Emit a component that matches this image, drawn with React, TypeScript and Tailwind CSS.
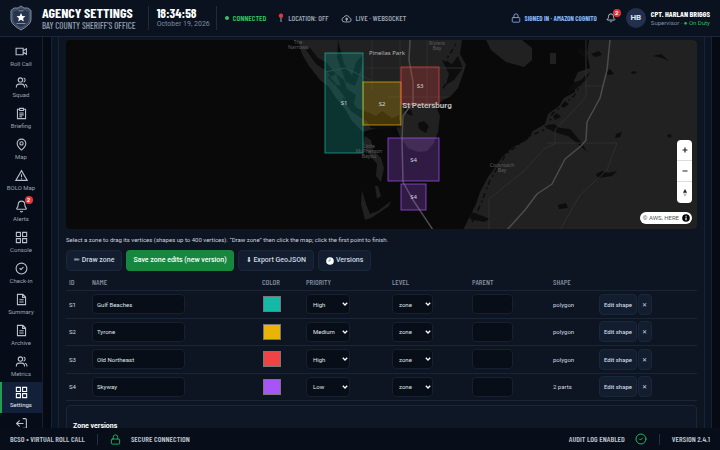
import type { ReactNode } from "react";
import { Bell, CircleCheck, Lock, LogOut, MapPin } from "lucide-react";

const condensed = "font-['Barlow_Condensed','Roboto_Condensed','Open_Sans_Condensed','Noto_Sans_Condensed','Liberation_Sans_Narrow',Roboto,sans-serif]";

type IconProps = { className?: string };

function Glyph({ className, children }: { className?: string; children: ReactNode }) {
  return (
    <svg viewBox="0 0 24 24" fill="none" stroke="currentColor" strokeWidth="2" className={className} aria-hidden="true">
      {children}
    </svg>
  );
}

function VideoIcon({ className }: IconProps) {
  return (
    <Glyph className={className}>
      <path d="M2 6h13v12H2ZM15 10.500 21 7v10l-6-3.500" />
    </Glyph>
  );
}

function PeopleIcon({ className }: IconProps) {
  return (
    <Glyph className={className}>
      <circle cx="10" cy="7.500" r="4" />
      <path d="M2.500 21v-1.500a5 5 0 0 1 5-4.500h5a5 5 0 0 1 5 4.500V21M16 3.700a4 4 0 0 1 0 7.600M18.500 15.200a5 5 0 0 1 3.500 4.300V21" />
    </Glyph>
  );
}

function ClipboardIcon({ className }: IconProps) {
  return (
    <Glyph className={className}>
      <path d="M8.500 4H4.500v17.500h15V4h-4M8.500 2.500h7v4h-7ZM8 11h8M8 14.500h8M8 18h5" />
    </Glyph>
  );
}

function TriangleIcon({ className }: IconProps) {
  return (
    <Glyph className={className}>
      <path d="M12 3 22.500 21h-21ZM12 9.500v5.500M12 17v1.800" />
    </Glyph>
  );
}

function GridIcon({ className }: IconProps) {
  return (
    <Glyph className={className}>
      <path d="M2.500 2.500h7.500v7.500H2.500ZM14 2.500h7.500v7.500H14ZM2.500 14h7.500v7.500H2.500ZM14 14h7.500v7.500H14Z" />
    </Glyph>
  );
}

function DocumentIcon({ className }: IconProps) {
  return (
    <Glyph className={className}>
      <path d="M14.500 2.500h-10v19h15v-14ZM14 2.500V8h5.500M8 12.500h8M8 16.500h8" />
    </Glyph>
  );
}

function CloudIcon({ className }: IconProps) {
  return (
    <Glyph className={className}>
      <path d="M7 19.500a5 5 0 0 1-.8-9.900 6.500 6.500 0 0 1 12.200.8 4.600 4.600 0 0 1-.6 9.100Z" />
      <circle cx="12.300" cy="13" r="2" fill="currentColor" />
      <path d="M12.300 14v4" />
    </Glyph>
  );
}

function Badge({ children }: { children: ReactNode }) {
  return (
    <span className="absolute -top-1 -right-[5px] flex size-2 items-center justify-center rounded-full bg-[#e5343a] text-[6px] leading-none font-bold text-white">
      {children}
    </span>
  );
}

const navItems = [
  { label: "Roll Call", Icon: VideoIcon },
  { label: "Squad", Icon: PeopleIcon },
  { label: "Briefing", Icon: ClipboardIcon },
  { label: "Map", Icon: MapPin },
  { label: "BOLO Map", Icon: TriangleIcon },
  { label: "Alerts", Icon: Bell, badge: 2 },
  { label: "Console", Icon: GridIcon },
  { label: "Check-in", Icon: CircleCheck },
  { label: "Summary", Icon: DocumentIcon },
  { label: "Archive", Icon: DocumentIcon },
  { label: "Metrics", Icon: PeopleIcon },
  { label: "Settings", Icon: GridIcon, active: true },
];

function Sidebar() {
  return (
    <nav className="w-[43px] shrink-0 overflow-hidden border-r border-[#172131] bg-[#070d18] pt-1">
      {navItems.map(({ label, Icon, badge, active }) => (
        <a
          key={label}
          href="#"
          className={
            "flex h-[31px] flex-col items-center gap-px border-l-2 pt-1 pr-0.5 text-[6px] leading-[10px] " +
            (active ? "border-[#22a050] bg-[#12203a] text-[#e4e9f0]" : "border-transparent text-[#9aa4b3]")
          }
        >
          <span className={"relative " + (active ? "text-white" : "text-[#b9c1cd]")}>
            <Icon className="size-[13px]" />
            {badge && <Badge>{badge}</Badge>}
          </span>
          <span className="whitespace-nowrap">{label}</span>
        </a>
      ))}
      <a href="#" aria-label="Sign out" className="flex h-[31px] justify-center border-l-2 border-transparent pt-1 pr-0.5 text-[#b9c1cd]">
        <LogOut className="size-[13px] rotate-180" />
      </a>
    </nav>
  );
}

function ShieldLogo() {
  return (
    <svg viewBox="0 0 22 26" className="h-[26px] w-[22px] shrink-0" aria-label="Sheriff badge">
      <path d="M11 1 14 3 18 3 21 5.500V14c0 5-5 8-10 11C6 22 1 19 1 14V5.500L4 3 8 3Z" fill="#35435b" stroke="#9aa8bc" strokeWidth="0.800" />
      <path d="M11 2.800 14 4.600 19.200 6V14c0 4-4 6.500-8.200 9C6.800 20.500 2.800 18 2.800 14V6L8 4.600Z" fill="#27344b" stroke="#66758c" strokeWidth="0.500" />
      <path d="m11 8 1.300 2.900 3.200.3-2.400 2.100.7 3.100-2.800-1.600-2.800 1.600.7-3.100-2.400-2.100 3.200-.3Z" fill="#fff" />
      <path d="M8.500 5.800h5M6.500 18.500h9" stroke="#8796ad" strokeWidth="0.900" />
    </svg>
  );
}

function Header() {
  return (
    <header className="flex h-[37px] shrink-0 items-center border-b border-[#1b2738] bg-[#0a1220] px-[10px]">
      <ShieldLogo />
      <div className={"ml-[10px] " + condensed}>
        <h1 className="text-[14px] leading-[15px] font-bold whitespace-nowrap text-white">AGENCY SETTINGS</h1>
        <p className="text-[9px] leading-[11px] font-medium whitespace-nowrap text-[#94a0b2]">BAY COUNTY SHERIFF'S OFFICE</p>
      </div>
      <span className="mr-2 ml-3 h-6 w-px bg-[#1f2a3b]" />
      <div>
        <div className={"text-[13px] leading-[13px] font-bold text-white " + condensed}>18:34:58</div>
        <div className="text-[7px] leading-[9px] whitespace-nowrap text-[#7f8b9d]">October 19, 2026</div>
      </div>
      <span className="mr-2 ml-[6px] h-6 w-px bg-[#1f2a3b]" />
      <div className={"flex items-center gap-3 text-[8px] leading-[10px] whitespace-nowrap text-[#a3adbb] " + condensed}>
        <span className="flex items-center gap-1 font-semibold text-[#35c463]">
          <span className="size-1 rounded-full bg-[#35c463]" />
          CONNECTED
        </span>
        <span className="flex items-center gap-1 font-medium">
          <svg viewBox="0 0 6 10" className="h-[10px] w-[6px]" aria-hidden="true">
            <path d="M3 4v5" stroke="#aab4c2" strokeWidth="0.900" />
            <circle cx="3" cy="2.800" r="2.200" fill="#e0383e" />
          </svg>
          LOCATION: OFF
        </span>
        <span className="flex items-center gap-1 font-medium">
          <CloudIcon className="size-[11px]" />
          LIVE · WEBSOCKET
        </span>
      </div>
      <div className="ml-auto flex items-center">
        <span className={"flex items-center gap-1 text-[7px] leading-[10px] font-bold whitespace-nowrap text-[#86b4ee] " + condensed}>
          <Lock className="size-[10px]" />
          SIGNED IN · AMAZON COGNITO
        </span>
        <button type="button" aria-label="Notifications" className="relative ml-[9px] text-[#d5dbe4]">
          <Bell className="size-[10px]" />
          <Badge>2</Badge>
        </button>
        <span className="ml-[10px] flex size-5 items-center justify-center rounded-full bg-[#22304e] text-[8px] font-bold text-[#dfe6f0]">
          HB
        </span>
        <div className="ml-[5px] whitespace-nowrap">
          <div className={"text-[8px] leading-[9px] font-bold text-white " + condensed}>CPT. HARLAN BRIGGS</div>
          <div className="text-[6px] leading-[8px] text-[#8290a3]">
            Supervisor · <span className="text-[#30b95c]">● On Duty</span>
          </div>
        </div>
      </div>
    </header>
  );
}

const mapZones = [
  { name: "S1", x: 259, y: 13, w: 38, h: 100, color: "#14b8a6" },
  { name: "S2", x: 297, y: 42, w: 38, h: 43, color: "#eab308" },
  { name: "S3", x: 335, y: 27, w: 38, h: 37, color: "#ef4444" },
  { name: "S4", x: 322, y: 98, w: 51, h: 43, color: "#a855f7" },
  { name: "S4", x: 335, y: 144, w: 25, h: 26, color: "#a855f7" },
];

function ZoneMap() {
  return (
    <div className="relative h-[189px] overflow-hidden rounded bg-[#090909]">
      <svg
        viewBox="0 0 631 189"
        preserveAspectRatio="xMidYMid slice"
        className="size-full font-['Noto_Sans',sans-serif]"
        role="img"
        aria-label="Zone map"
      >
        {/* land */}
        <g fill="#212121">
          <path d="M232 0 236 14 243 26 254 40 263 47 270 58 279 69 286 81 297 92 303 90 312 88 330 86 334 97 342 108 352 112 361 111 368 103 372 92 374 76 370 66 377 60 384 57 392 48 397 34 400 25 394 14 396 0Z" />
          <path d="M523 0 521 14 524 28 512 32 508 41 509 52 498 58 493 66 482 74 479 84 467 91 461 100 447 107 436 117 430 126 422 137 414 152 410 164 404 176 397 190H631V0Z" />
          <path d="M420 0 425 10 440 22 458 27 466 20 466 8 456 0ZM484 13h6v11h-6Z" />
          <path d="M299 96l6 4 2 10 8 8 3 10-3 14-5-6 1-12-8-10-6-10ZM296 150l4 14 4 10 8-3 13-10-2 5-18 12-6 2-4-16ZM309 146h3l3 10-4 3Z" />
        </g>
        {/* inlets and lakes */}
        <g fill="#0d0d0d">
          <path d="M240 10l10 14 12 8 6 12 7 2-5-12-9-11-9-5-8-10ZM272 0l6 24 8 12 4-14 8-8-3 16-6 16-9-4-9-24ZM302 72l8 4 6-5 10 7 7-3 1 12-14 2-15-1-6-10ZM262 38l8-4 8 6 3 9 9 6-2 8-8-4-9-12ZM276 58l9 2 6 8 10 4 2 10-8-4-10-7ZM376 20l10 4 6-8 5 12-9 12-8 5 3-11ZM352 83l6-2 5 5-3 7-7-4ZM338 68l7 2 2 6-8-3ZM513 8l7 2 2 6-5 1-6-5ZM502 50l5-7 8-3 9-8-4 8-9 8-9 5ZM478 86l10-2 6 4 10 1 12 14 5 9-10-9-9-7-14-4ZM539 32l5-3 4 5-6 1ZM525 14l8-3 3 4-7 2ZM587 16l8-2 8 7-7-3ZM565 32l4-1 2 2-5 1ZM601 95l3-1 2 2-3 2ZM550 94l6-2-2 5-5 1ZM492 165l8-2 2 5-9 1ZM530 134l6-3 6 2 9-2-5 5-14 2ZM405 172l9 3 10 4-6 3-14-3ZM487 76l4-3 4 4-6 3ZM495 66l4-5 4 3-5 4Z" />
        </g>
        {/* coastline texture */}
        <g fill="none" stroke="#0c0c0c" strokeWidth="1.500" strokeDasharray="2 4 5 3">
          <path d="M262 36 280 56 293 74 309 90 324 84 334 88" />
          <path d="M390 4 380 20 388 30 376 50" />
          <path d="M519 36 508 56 486 74 482 88 464 96 440 114 424 140 414 166 406 182" />
        </g>
        {/* minor roads */}
        <g fill="none" stroke="#2f2f2f" strokeWidth="1">
          <path d="M306 0v50M334 0v80M361 0v64M300 28h98M322 57h60M259 32l20-4 26 12" />
          <path d="M520 0V57L489 90v14l-10 4-20 22-36 29v31M520 46h16M481 103h70l-10 27-27 25-20 35" />
        </g>
        {/* highways */}
        <g fill="none" stroke="#4c4c4c" strokeWidth="1.500" strokeLinejoin="round">
          <path d="M544 0 541 30 534 58 521 82 520 100 515 106 499 119 486 144 471 154 459 170 441 190" />
          <path d="M344 0 343 20 347 42 347 62 337 76 336 100 337 142 347 160 367 190" />
        </g>
        {mapZones.map((z) => (
          <g key={z.name + z.y}>
            <rect x={z.x} y={z.y} width={z.w} height={z.h} fill={z.color} fillOpacity="0.250" stroke={z.color} strokeOpacity="0.700" strokeWidth="1" />
            <text x={z.x + z.w / 2} y={z.y + z.h / 2 + 2} textAnchor="middle" fontSize="6" fill="#d6d6d6">
              {z.name}
            </text>
          </g>
        ))}
        <g fontSize="5" fill="#5f5f5f" textAnchor="middle">
          <text x="232" y="4">The</text>
          <text x="232" y="9">Narrows</text>
          <text x="371" y="5">Riviera</text>
          <text x="371" y="10">Bay</text>
          <text x="303" y="108">Little</text>
          <text x="303" y="113">McPherson</text>
          <text x="303" y="118">Bayou</text>
          <text x="436" y="127">Cockroach</text>
          <text x="436" y="132">Bay</text>
        </g>
        <text x="321" y="15" textAnchor="middle" fontSize="6" fill="#b5b5b5">Pinellas Park</text>
        <text x="361" y="68" textAnchor="middle" fontSize="8" fontWeight="700" fill="#bdbdbd" className="font-[Roboto,sans-serif]">St Petersburg</text>
      </svg>
      <div className="absolute right-[5px] bottom-[26px] flex w-[15px] flex-col divide-y divide-[#dddddd] rounded-sm bg-white text-[#222222]">
        <button type="button" aria-label="Zoom in" className="flex h-[21px] items-center justify-center">
          <svg viewBox="0 0 6 6" className="size-[6px]"><path d="M3 0.500v5M0.500 3h5" stroke="currentColor" strokeWidth="1.200" /></svg>
        </button>
        <button type="button" aria-label="Zoom out" className="flex h-[21px] items-center justify-center">
          <svg viewBox="0 0 6 6" className="size-[6px]"><path d="M0.500 3h5" stroke="currentColor" strokeWidth="1.200" /></svg>
        </button>
        <button type="button" aria-label="Reset bearing" className="flex h-[21px] items-center justify-center">
          <svg viewBox="0 0 6 10" className="h-[10px] w-[6px]"><path d="M3 1 5 4.700H1Z" fill="#222" /><path d="M3 9 1 5.500h4Z" fill="#bbb" /></svg>
        </button>
      </div>
      <div className="absolute right-[5px] bottom-[5px] flex h-3 items-center gap-[3px] rounded-full bg-white pr-[2px] pl-[3px] text-[6px] leading-none text-[#555555]">
        © AWS, HERE
        <svg viewBox="0 0 8 8" className="size-2"><circle cx="4" cy="4" r="3.800" fill="#000" /><path d="M4 3.500v2.700M4 1.700v1" stroke="#fff" strokeWidth="1.200" /></svg>
      </div>
    </div>
  );
}

const ghost = "border border-[#1a2739] bg-[#121e30] text-[#d0d7e1]";
const field = "h-5 rounded border border-[#162030] bg-[#080e18] text-[6px] text-[#dfe4eb]";

function SelectField({ label, value, options, width }: { label: string; value: string; options: string[]; width: string }) {
  return (
    <span className={"relative block " + width}>
      <select aria-label={label} defaultValue={value} className={"block w-full appearance-none pl-[6px] " + field}>
        {options.map((o) => (
          <option key={o}>{o}</option>
        ))}
      </select>
      <svg viewBox="0 0 6 6" className="pointer-events-none absolute top-[7px] right-[2px] size-[6px]" aria-hidden="true">
        <path d="M0.800 1.800 3 4l2.200-2.200" fill="none" stroke="#fff" strokeWidth="1.300" />
      </svg>
    </span>
  );
}

const rows = [
  { id: "S1", name: "Gulf Beaches", color: "#14b8a6", priority: "High", shape: "polygon" },
  { id: "S2", name: "Tyrone", color: "#eab308", priority: "Medium", shape: "polygon" },
  { id: "S3", name: "Old Northeast", color: "#ef4444", priority: "High", shape: "polygon" },
  { id: "S4", name: "Skyway", color: "#a855f7", priority: "Low", shape: "2 parts" },
];

function ZoneTable() {
  return (
    <table className="w-full table-fixed border-collapse text-left text-[6px] text-[#d0d7e1]">
      <colgroup>
        <col className="w-[23px]" />
        <col />
        <col className="w-[44px]" />
        <col className="w-[86px]" />
        <col className="w-[80px]" />
        <col className="w-[81px]" />
        <col className="w-[46px]" />
        <col className="w-[101px]" />
      </colgroup>
      <thead>
        <tr className={"h-[19px] border-b border-[#1a2535] text-[8px] leading-[10px] text-[#8491a4] " + condensed}>
          {["ID", "NAME", "COLOR", "PRIORITY", "LEVEL", "PARENT", "SHAPE"].map((h) => (
            <th key={h} scope="col" className="px-[3px] pt-[3px] pb-0 font-medium">
              {h}
            </th>
          ))}
          <td />
        </tr>
      </thead>
      <tbody>
        {rows.map((r) => (
          <tr key={r.id} className="border-b border-[#1a2535] odd:h-[28px] even:h-[27px]">
            <td className="px-[3px] py-0">{r.id}</td>
            <td className="px-[3px] py-0">
              <input aria-label={"Name of " + r.id} defaultValue={r.name} className={"block w-[93px] px-1 " + field} />
            </td>
            <td className="px-[3px] py-0">
              <input
                type="color"
                aria-label={"Color of " + r.id}
                defaultValue={r.color}
                className="ml-px block h-4 w-[18px] appearance-none bg-transparent [&::-webkit-color-swatch]:border-[#777777] [&::-webkit-color-swatch-wrapper]:p-0"
              />
            </td>
            <td className="px-[3px] py-0">
              <SelectField label={"Priority of " + r.id} value={r.priority} options={["High", "Medium", "Low"]} width="w-[44px]" />
            </td>
            <td className="px-[3px] py-0">
              <SelectField label={"Level of " + r.id} value="zone" options={["zone", "sector"]} width="w-[41px]" />
            </td>
            <td className="px-[3px] py-0">
              <input aria-label={"Parent of " + r.id} className={"block w-[41px] px-1 " + field} />
            </td>
            <td className="px-[3px] py-0">{r.shape}</td>
            <td className="px-[3px] py-0">
              <div className="flex gap-px">
                <button type="button" className={"h-[21px] rounded px-1 font-medium whitespace-nowrap " + ghost}>
                  Edit shape
                </button>
                <button type="button" aria-label={"Delete " + r.id} className={"h-[21px] w-[14px] rounded font-medium " + ghost}>
                  ✕
                </button>
              </div>
            </td>
          </tr>
        ))}
      </tbody>
    </table>
  );
}

function Footer() {
  return (
    <footer className={"flex h-[22px] shrink-0 items-center bg-[#080e19] px-[10px] text-[8px] font-semibold whitespace-nowrap text-[#b9c1cd] " + condensed}>
      <span>BCSO • VIRTUAL ROLL CALL</span>
      <span className="mx-3 h-[11px] w-px bg-[#243042]" />
      <Lock className="mr-[10px] size-[11px] text-[#27b45a]" />
      <span>SECURE CONNECTION</span>
      <span className="ml-auto">AUDIT LOG ENABLED</span>
      <CircleCheck className="ml-[10px] size-3 text-[#27b45a]" />
      <span className="mx-3 h-[11px] w-px bg-[#243042]" />
      <span>VERSION 2.4.1</span>
    </footer>
  );
}

export default function App() {
  const action = "h-[21px] rounded px-[7px] text-[7px] font-medium whitespace-nowrap ";
  return (
    <div className="flex h-screen flex-col overflow-hidden bg-[#050a13] font-[Roboto,sans-serif]">
      <Header />
      <div className="flex min-h-0 flex-1">
        <Sidebar />
        <main className="min-w-0 flex-1 overflow-hidden px-2">
          <div className="h-full border-x border-[#172234] bg-[#0b1422] px-[6px]">
            <div className="border-x border-[#182334] bg-[#0d1523] px-[7px] pt-[3px]">
              <ZoneMap />
              <p className="mt-1 text-[6px] leading-[13px] text-[#cdd4de]">
                Select a zone to drag its vertices (shapes up to 400 vertices). “Draw zone” then click the map; click the first point to finish.
              </p>
              <div className="mt-1 flex gap-1">
                <button type="button" className={action + ghost}>✏ Draw zone</button>
                <button type="button" className={action + "bg-[#17873f] font-bold text-white"}>Save zone edits (new version)</button>
                <button type="button" className={action + ghost}>⬇ Export GeoJSON</button>
                <button type="button" className={action + "flex items-center gap-[2px] " + ghost}>
                  <svg viewBox="0 0 8 8" className="size-2" aria-hidden="true"><circle cx="4" cy="4" r="3.800" fill="#fff" /><path d="M4 1.500V4H2.200" fill="none" stroke="#667" strokeWidth="0.700" /></svg>
                  Versions
                </button>
              </div>
              <ZoneTable />
              <section className="mt-1 h-16 rounded border border-[#1a2535] bg-[#0e1725] px-[6px] pt-[15px]">
                <h2 className="text-[7px] leading-[10px] font-bold text-white">Zone versions</h2>
              </section>
            </div>
          </div>
        </main>
      </div>
      <Footer />
    </div>
  );
}
